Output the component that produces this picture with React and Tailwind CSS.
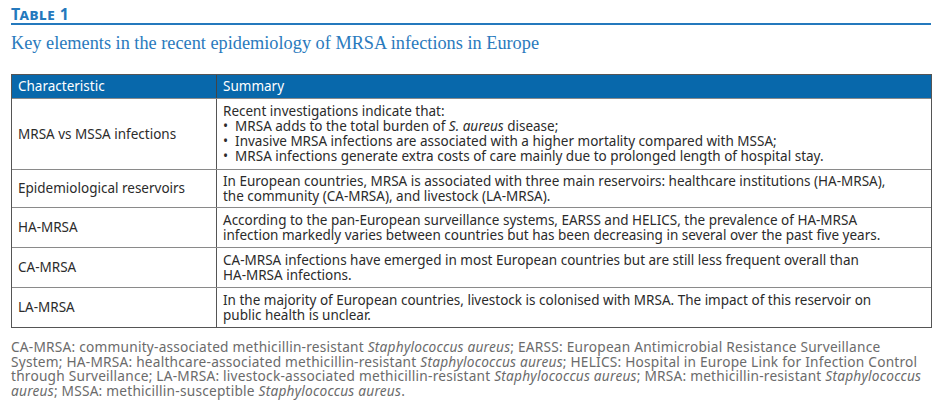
import React from 'react';

const rows = [
    {
        label: 'MRSA vs MSSA infections',
        h: 'h-[71px]',
        lines: [
            <>Recent investigations indicate that:</>,
            <>• &nbsp;MRSA adds to the total burden of <i>S. aureus</i> disease;</>,
            <>• &nbsp;Invasive MRSA infections are associated with a higher mortality compared with MSSA;</>,
            <>• &nbsp;MRSA infections generate extra costs of care mainly due to prolonged length of hospital stay.</>,
        ],
    },
    {
        label: 'Epidemiological reservoirs',
        h: 'h-[38px]',
        lines: [
            <>In European countries, MRSA is associated with three main reservoirs: healthcare institutions (HA-MRSA),</>,
            <>the community (CA-MRSA), and livestock (LA-MRSA).</>,
        ],
    },
    {
        label: 'HA-MRSA',
        h: 'h-[40px]',
        lines: [
            <>According to the pan-European surveillance systems, EARSS and HELICS, the prevalence of HA-MRSA</>,
            <>infection markedly varies between countries but has been decreasing in several over the past five years.</>,
        ],
    },
    {
        label: 'CA-MRSA',
        h: 'h-[40px]',
        lines: [
            <>CA-MRSA infections have emerged in most European countries but are still less frequent overall than</>,
            <>HA-MRSA infections.</>,
        ],
    },
    {
        label: 'LA-MRSA',
        h: 'h-[40px]',
        lines: [
            <>In the majority of European countries, livestock is colonised with MRSA. The impact of this reservoir on</>,
            <>public health is unclear.</>,
        ],
    },
];

export default function App() {
    return (
        <div className="h-[406px] w-[949px] overflow-hidden bg-white px-[11px] pt-[6px] font-['Noto_Sans',sans-serif]">
            <div className="w-[920px] border-b-2 border-[#2479bd] pb-[1px]">
                <h1 className="text-[16px] font-bold leading-[16px] tracking-[0.5px] text-[#2479bd] [font-variant:small-caps]">
                    Table 1
                </h1>
            </div>
            <p className="mt-[7px] font-['Liberation_Serif',serif] text-[18.3px] leading-[22px] text-[#2a7abd]">
                Key elements in the recent epidemiology of MRSA infections in Europe
            </p>

            <div className="mt-[20px] w-[921px] border border-[#555] text-[13.5px] leading-[15px] text-[#2b2b2b]">
                <div className="flex h-[23px] bg-[#0868ab] text-white">
                    <div className="flex w-[205px] items-center border-r border-[#444] px-[6px]">Characteristic</div>
                    <div className="flex flex-1 items-center px-[6px]">Summary</div>
                </div>
                {rows.map((r) => (
                    <div key={r.label} className={`flex border-t border-[#8a8a8a] ${r.h}`}>
                        <div className="flex w-[205px] items-center border-r border-[#555] px-[6px]">{r.label}</div>
                        <div className="flex flex-1 flex-col justify-center px-[6px] whitespace-nowrap">
                            {r.lines.map((l, i) => (
                                <div key={i}>{l}</div>
                            ))}
                        </div>
                    </div>
                ))}
            </div>

            <p className="mt-[12px] whitespace-nowrap text-[13.7px] leading-[14.5px] tracking-[0.22px] text-[#6b6b6b]">
                CA-MRSA: community-associated methicillin-resistant <i>Staphylococcus aureus</i>; EARSS: European Antimicrobial Resistance Surveillance
                <br />
                System; HA-MRSA: healthcare-associated methicillin-resistant <i>Staphylococcus aureus</i>; HELICS: Hospital in Europe Link for Infection Control
                <br />
                through Surveillance; LA-MRSA: livestock-associated methicillin-resistant <i>Staphylococcus aureus</i>; MRSA: methicillin-resistant <i>Staphylococcus</i>
                <br />
                <i>aureus</i>; MSSA: methicillin-susceptible <i>Staphylococcus aureus</i>.
            </p>
        </div>
    );
}
